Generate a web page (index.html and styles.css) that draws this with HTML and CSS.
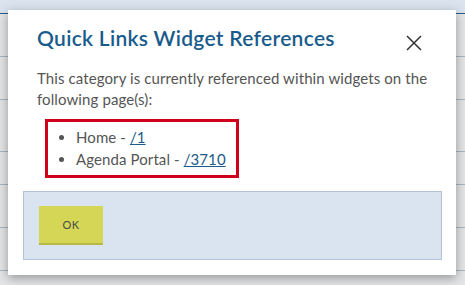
FILE: index.html
```html
<!DOCTYPE html>
<html>
<head>
<meta charset="utf-8">
<link rel="stylesheet" href="styles.css">
</head>
<body>
<div class="page">
  <div class="topband"></div>
  <div class="row r1"></div>
  <div class="row r2"></div>
  <div class="row r3"></div>
  <div class="row r4"></div>
  <div class="row r5"></div>
  <div class="row r6"></div>
</div>
<div class="modal">
  <div class="modal-head">
    <h2 class="title">Quick Links Widget References</h2>
    <button class="close" aria-label="Close">
      <svg width="16" height="16" viewBox="0 0 16 16"><path d="M1 1 L15 15 M15 1 L1 15" stroke="#333" stroke-width="1.5" fill="none"/></svg>
    </button>
  </div>
  <p class="desc">This category is currently referenced within widgets on the following page(s):</p>
  <div class="highlight">
    <ul class="refs">
      <li>Home - <a href="#">/1</a></li>
      <li>Agenda Portal - <a href="#">/3710</a></li>
    </ul>
  </div>
  <div class="footer">
    <button class="ok">OK</button>
  </div>
</div>
</body>
</html>
```
FILE: styles.css
```css
html, body {
  margin: 0;
  padding: 0;
}
body {
  width: 465px;
  height: 285px;
  overflow: hidden;
  background: #e4e5e7;
  font-family: Lato, "Noto Sans", sans-serif;
}
.page {
  display: flex;
  flex-direction: column;
}
.topband {
  height: 13px;
  background: #dbe4ee;
  border-bottom: 1px solid #2b5b88;
}
.row {
  border-bottom: 1px solid #aab6c4;
}
.r1 { height: 42px; }
.r2 { height: 42px; }
.r3 { height: 51px; }
.r4 { height: 32px; }
.r5 { height: 42px; }
.r6 { height: 42px; }

.modal {
  position: absolute;
  left: 8px;
  top: 10px;
  width: 448px;
  height: 265px;
  box-sizing: border-box;
  background: #fff;
  box-shadow: 0 3px 10px rgba(0,0,0,0.35);
  padding: 0 14px 15px 15px;
  display: flex;
  flex-direction: column;
}
.modal-head {
  display: flex;
  justify-content: space-between;
  align-items: flex-start;
  padding: 15px 20px 0 14px;
}
.title {
  margin: 0;
  font-size: 21px;
  line-height: 26px;
  font-weight: 600;
  letter-spacing: 0.3px;
  color: #195c8c;
}
.close {
  border: 0;
  background: none;
  padding: 0;
  margin-top: 10px;
  width: 16px;
  height: 16px;
  display: block;
}
.close svg { display: block; }
.desc {
  margin: 17px 0 0 14px;
  font-size: 15px;
  line-height: 21px;
  letter-spacing: 0.1px;
  color: #555;
  width: 400px;
}
.highlight {
  align-self: flex-start;
  margin: 9px 0 0 22px;
  border: 3px solid #d0021b;
  padding: 4px 10px 5px 0;
}
.refs {
  margin: 0;
  padding: 0 0 0 28px;
  font-size: 15px;
  line-height: 22px;
  letter-spacing: 0.1px;
  color: #555;
}
.refs a {
  color: #1a5a8c;
  text-decoration: underline;
}
.footer {
  margin-top: auto;
  height: 69px;
  box-sizing: border-box;
  background: #dae4f0;
  border: 1px solid #b3c2d6;
  padding: 14px 15px;
}
.ok {
  width: 64px;
  height: 39px;
  border: 0;
  border-bottom: 2px solid #b8b845;
  background: #d5d656;
  color: #4a4a4a;
  font-family: Lato, "Noto Sans", sans-serif;
  font-size: 11px;
  letter-spacing: 0.5px;
  padding: 0;
  display: block;
}
```
